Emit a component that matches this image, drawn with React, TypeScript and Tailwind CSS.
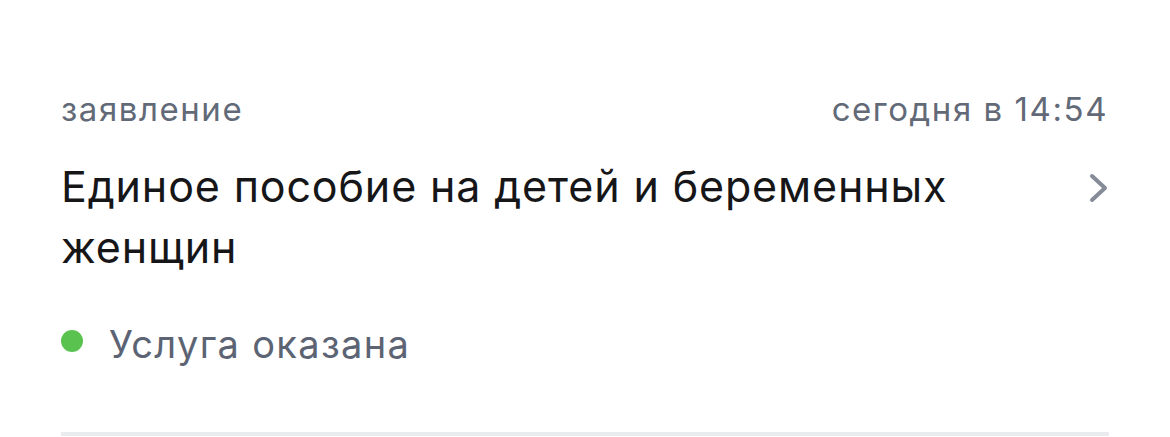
export default function App() {
  return (
    <div
      className="h-[437px] w-full overflow-hidden bg-white px-[61px] pt-[89px]"
      style={{ fontFamily: "Inter, 'Noto Sans', sans-serif" }}
    >
      <div className="flex items-start justify-between text-[33px] leading-[40px] tracking-[0.047em] text-[#626a78]">
        <span>заявление</span>
        <span className="mr-[1px]">сегодня в 14:54</span>
      </div>

      <div className="mt-[27px] flex items-start justify-between">
        <h2 className="max-w-[960px] text-[43px] leading-[61px] font-normal tracking-[0.02em] text-[#161618]">
          Единое пособие на детей и беременных женщин
        </h2>
        <svg
          className="mt-[17px] shrink-0"
          width="20"
          height="30"
          viewBox="0 0 20 30"
          fill="none"
        >
          <polyline
            points="3,3 16,15 3,27"
            stroke="#858b97"
            strokeWidth="4"
            strokeLinecap="round"
            strokeLinejoin="round"
          />
        </svg>
      </div>

      <div className="mt-[44px] flex items-start gap-[26px]">
        <span className="mt-[8px] h-[22px] w-[22px] shrink-0 rounded-full bg-[#5ac24f]" />
        <span className="text-[38px] leading-[44px] tracking-[0.035em] text-[#5c6474]">Услуга оказана</span>
      </div>

      <div className="mt-[66px] h-[4px] w-full bg-[#e9ebee]" />
    </div>
  );
}
